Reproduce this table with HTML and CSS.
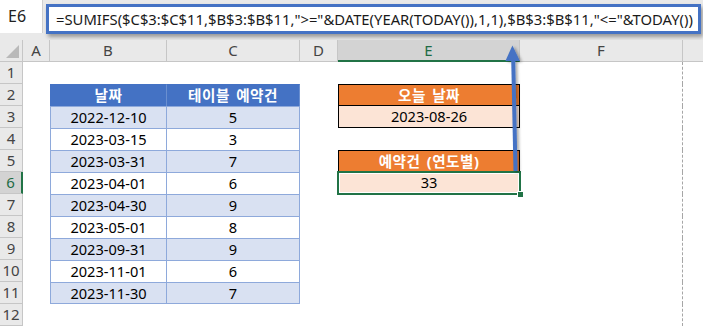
FILE: index.html
```html
<!DOCTYPE html>
<html lang="ko">
<head>
<meta charset="utf-8">
<title>SUMIFS 연도별</title>
<link rel="stylesheet" href="styles.css">
</head>
<body>
<div class="app">
  <div class="fbar">
    <div class="namebox">E6</div>
    <div class="formula">=SUMIFS($C$3:$C$11,$B$3:$B$11,"&gt;="&amp;DATE(YEAR(TODAY()),1,1),$B$3:$B$11,"&lt;="&amp;TODAY())</div>
  </div>
  <div class="sheet">
    <div class="corner"><span class="tri"></span></div>
    <div class="ch">A</div><div class="ch">B</div><div class="ch">C</div><div class="ch">D</div><div class="ch ch-sel">E</div><div class="ch">F</div><div class="ch ch-last"></div>

    <div class="rh">1</div><div class="c"></div><div class="c"></div><div class="c"></div><div class="c"></div><div class="c"></div><div class="c pb"></div><div class="c"></div>

    <div class="rh">2</div><div class="c"></div><div class="c tb th tl">날짜</div><div class="c tb th">테이블 예약건</div><div class="c"></div><div class="c ox oh">오늘 날짜</div><div class="c pb"></div><div class="c"></div>

    <div class="rh">3</div><div class="c"></div><div class="c tb band tl">2022-12-10</div><div class="c tb band">5</div><div class="c"></div><div class="c ox ol nt">2023-08-26</div><div class="c pb"></div><div class="c"></div>

    <div class="rh">4</div><div class="c"></div><div class="c tb tl">2023-03-15</div><div class="c tb">3</div><div class="c"></div><div class="c"></div><div class="c pb"></div><div class="c"></div>

    <div class="rh">5</div><div class="c"></div><div class="c tb band tl">2023-03-31</div><div class="c tb band">7</div><div class="c"></div><div class="c ox oh">예약건 (연도별)</div><div class="c pb"></div><div class="c"></div>

    <div class="rh rh-sel">6</div><div class="c"></div><div class="c tb tl">2023-04-01</div><div class="c tb">6</div><div class="c"></div><div class="c sel">33<span class="handle"></span></div><div class="c pb"></div><div class="c"></div>

    <div class="rh">7</div><div class="c"></div><div class="c tb band tl">2023-04-30</div><div class="c tb band">9</div><div class="c"></div><div class="c"></div><div class="c pb"></div><div class="c"></div>

    <div class="rh">8</div><div class="c"></div><div class="c tb tl">2023-05-01</div><div class="c tb">8</div><div class="c"></div><div class="c"></div><div class="c pb"></div><div class="c"></div>

    <div class="rh">9</div><div class="c"></div><div class="c tb band tl">2023-09-31</div><div class="c tb band">9</div><div class="c"></div><div class="c"></div><div class="c pb"></div><div class="c"></div>

    <div class="rh">10</div><div class="c"></div><div class="c tb tl">2023-11-01</div><div class="c tb">6</div><div class="c"></div><div class="c"></div><div class="c pb"></div><div class="c"></div>

    <div class="rh">11</div><div class="c"></div><div class="c tb band tl lastrow">2023-11-30</div><div class="c tb band lastrow">7</div><div class="c"></div><div class="c"></div><div class="c pb"></div><div class="c"></div>

    <div class="rh">12</div><div class="c"></div><div class="c"></div><div class="c"></div><div class="c"></div><div class="c"></div><div class="c pb"></div><div class="c"></div>
  </div>
  <svg class="arrow" width="703" height="328" viewBox="0 0 703 328" aria-hidden="true">
    <defs>
      <filter id="sh" x="-50%" y="-10%" width="200%" height="120%">
        <feDropShadow dx="2" dy="1" stdDeviation="1.5" flood-color="#000" flood-opacity="0.35"/>
      </filter>
    </defs>
    <g filter="url(#sh)">
      <line x1="515.5" y1="171" x2="513.2" y2="58" stroke="#4472C4" stroke-width="4"/>
      <polygon points="512.4,45.5 520,61 505.4,61" fill="#4472C4"/>
    </g>
  </svg>
</div>
</body>
</html>
```
FILE: styles.css
```css
* { box-sizing: border-box; }
html, body { margin: 0; padding: 0; background: #fff; }
body { width: 703px; height: 328px; overflow: hidden; }

.app {
  position: relative;
  width: 703px;
  height: 328px;
  overflow: hidden;
  font-family: "Noto Sans", "Noto Sans CJK KR", sans-serif;
  color: #000;
}

.fbar {
  display: flex;
  align-items: flex-start;
  height: 40px;
  background: #e9e9e9;
}
.namebox {
  width: 43px;
  height: 33px;
  background: #fff;
  border-right: 1px solid #d0d0d0;
  padding-left: 8px;
  font-size: 16px;
  line-height: 33px;
  color: #222;
}
.formula {
  margin: 4px 0 0 3px;
  width: 655px;
  height: 30px;
  background: #fff;
  border: 3px solid #4472C4;
  box-shadow: 2px 3px 4px rgba(0,0,0,0.35);
  padding-left: 7px;
  font-size: 14.8px;
  line-height: 24px;
  color: #1a1a1a;
  white-space: nowrap;
  overflow: hidden;
}

.sheet {
  display: grid;
  grid-template-columns: 23px 27px 117px 133px 38px 182px 163px 20px;
  grid-auto-rows: 22px;
  font-size: 14.6px;
}

.corner {
  position: relative;
  background: #e9e9e9;
  border-right: 1px solid #c6c6c6;
  border-bottom: 1px solid #c6c6c6;
}
.tri {
  position: absolute;
  right: 3px;
  bottom: 3px;
  width: 0;
  height: 0;
  border-left: 13px solid transparent;
  border-bottom: 13px solid #b9b9b9;
}

.ch {
  background: #e9e9e9;
  border-right: 1px solid #c6c6c6;
  border-bottom: 1px solid #c6c6c6;
  text-align: center;
  line-height: 21px;
  font-size: 15px;
  color: #444;
}
.ch-sel {
  background: #d3d3d3;
  border-bottom: 2px solid #217346;
  color: #1e6b45;
}
.ch-last { border-right: none; }

.rh {
  background: #e9e9e9;
  border-right: 1px solid #c6c6c6;
  border-bottom: 1px solid #c6c6c6;
  text-align: center;
  line-height: 21px;
  font-size: 15px;
  color: #444;
}
.rh-sel {
  background: #d3d3d3;
  border-right: 2px solid #217346;
  color: #1e6b45;
}

.c {
  text-align: center;
  line-height: 21px;
  white-space: nowrap;
}
.pb { border-right: 1px dashed #a6a6a6; }

.tb {
  border-top: 1px solid #8EA9DB;
  border-right: 1px solid #8EA9DB;
}
.tl { border-left: 1px solid #8EA9DB; }
.th {
  background: #4472C4;
  border-color: #4472C4 #6a8fd0 #4472C4 #4472C4;
  color: #fff;
  font-weight: bold;
  letter-spacing: 0.5px;
  word-spacing: 2px;
}
.th.tl { border-left-color: #4472C4; }
.band { background: #D9E1F2; }
.lastrow { border-bottom: 1px solid #8EA9DB; }

.ox {
  border: 1px solid #000;
}
.nt { border-top: none; }
.oh {
  background: #ED7D31;
  color: #fff;
  font-weight: bold;
  letter-spacing: 0.5px;
  word-spacing: 2px;
}
.ol { background: #FCE4D6; }

.sel {
  position: relative;
  background: #FCE4D6;
  outline: 2px solid #217346;
  outline-offset: -1px;
  box-shadow: inset 0 0 0 2px #fff;
}
.handle {
  position: absolute;
  right: -4px;
  bottom: -4px;
  width: 7px;
  height: 7px;
  background: #217346;
  border: 1px solid #fff;
}

.arrow {
  position: absolute;
  left: 0;
  top: 0;
  pointer-events: none;
}
```
